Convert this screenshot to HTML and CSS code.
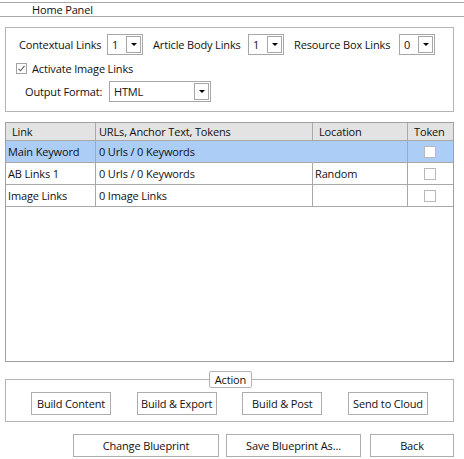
FILE: index.html
```html
<!DOCTYPE html>
<html>
<head>
<meta charset="utf-8">
<link rel="stylesheet" href="styles.css">
</head>
<body>
<div class="tabbar"><span class="tab">Home Panel</span></div>

<div class="group opts">
  <div class="row r1">
    <span class="lbl l1">Contextual Links</span>
    <div class="combo small"><span class="val">1</span><span class="dd"><i class="arrow"></i></span></div>
    <span class="lbl l2">Article Body Links</span>
    <div class="combo small"><span class="val">1</span><span class="dd"><i class="arrow"></i></span></div>
    <span class="lbl l3">Resource Box Links</span>
    <div class="combo small"><span class="val">0</span><span class="dd"><i class="arrow"></i></span></div>
  </div>
  <div class="row r2">
    <svg class="chk" width="11" height="11" viewBox="0 0 11 11"><rect x="0.5" y="0.5" width="10" height="10" fill="#fff" stroke="#a2a2a2"/><polyline points="2.5,5.8 4.5,7.8 8.5,2.8" fill="none" stroke="#5f5f5f" stroke-width="1.1"/></svg>
    <span class="chklbl">Activate Image Links</span>
  </div>
  <div class="row r3">
    <span class="lbl l4">Output Format:</span>
    <div class="combo wide"><span class="val">HTML</span><span class="dd"><i class="arrow"></i></span></div>
  </div>
</div>

<div class="grid">
  <div class="hd c1">Link</div>
  <div class="hd c2">URLs, Anchor Text, Tokens</div>
  <div class="hd c3">Location</div>
  <div class="hd c4">Token</div>

  <div class="cell c1 sel">Main Keyword</div>
  <div class="cell c2 sel sel-join">0 Urls / 0 Keywords</div>
  <div class="cell c3 sel"></div>
  <div class="cell c4 sel"><span class="tbox"></span></div>

  <div class="cell c1">AB Links 1</div>
  <div class="cell c2">0 Urls / 0 Keywords</div>
  <div class="cell c3">Random</div>
  <div class="cell c4"><span class="tbox"></span></div>

  <div class="cell c1">Image Links</div>
  <div class="cell c2">0 Image Links</div>
  <div class="cell c3"></div>
  <div class="cell c4"><span class="tbox"></span></div>
</div>

<div class="group action">
  <span class="legend">Action</span>
  <button class="btn abtn">Build Content</button>
  <button class="btn abtn">Build &amp; Export</button>
  <button class="btn abtn">Build &amp; Post</button>
  <button class="btn abtn">Send to Cloud</button>
</div>

<div class="footer">
  <button class="btn fb1">Change Blueprint</button>
  <button class="btn fb2">Save Blueprint As...</button>
  <button class="btn fb3">Back</button>
</div>
</body>
</html>
```
FILE: styles.css
```css
html, body {
  margin: 0;
  padding: 0;
  background: #ffffff;
}
body {
  width: 464px;
  height: 459px;
  overflow: hidden;
  font-family: "Open Sans", "Noto Sans", sans-serif;
  font-size: 11px;
  letter-spacing: -0.15px;
  color: #111;
}
.tabbar {
  margin-top: 2px;
  height: 15px;
  box-sizing: border-box;
  border-top: 1px solid #a9a9a9;
  border-bottom: 1px solid #a9a9a9;
  padding-left: 32px;
  line-height: 13px;
}
.group {
  box-sizing: border-box;
  width: 449px;
  margin-left: 5px;
  border: 1px solid #b4b4b4;
}
.opts {
  margin-top: 10px;
  height: 85px;
}
.row {
  display: flex;
  align-items: center;
}
.r1 {
  margin-top: 6px;
  height: 21px;
  padding-left: 13px;
}
.r2 {
  height: 26px;
  padding-left: 10px;
}
.r3 {
  height: 21px;
  padding-left: 19px;
}
.lbl { white-space: nowrap; }
.l1 { width: 88px; }
.l2 { width: 95px; margin-left: 10px; }
.l3 { width: 105px; margin-left: 10px; }
.l4 { width: 84px; }
.chk { display: block; }
.chklbl { margin-left: 5px; }
.combo {
  box-sizing: border-box;
  height: 21px;
  border: 1px solid #a7a7a7;
  display: flex;
  align-items: center;
  padding: 0 1px 0 4px;
  background: #fff;
}
.combo.small { width: 36px; }
.combo.wide { width: 102px; }
.combo .val { flex: 1; }
.dd {
  box-sizing: border-box;
  width: 15px;
  height: 17px;
  border: 1px solid #a7a7a7;
  display: flex;
  align-items: center;
  justify-content: center;
}
.arrow {
  width: 0;
  height: 0;
  border-left: 3px solid transparent;
  border-right: 3px solid transparent;
  border-top: 3px solid #000;
}
.grid {
  box-sizing: border-box;
  width: 449px;
  height: 240px;
  margin: 10px 0 0 5px;
  border: 1px solid #a0a0a0;
  display: grid;
  grid-template-columns: 90px 217px 95px 45px;
  grid-template-rows: 18px 22px 22px 22px;
  align-content: start;
}
.hd, .cell {
  box-sizing: border-box;
  border-bottom: 1px solid #a8a8a8;
  border-right: 1px solid #a8a8a8;
  display: flex;
  align-items: center;
  white-space: nowrap;
}
.hd {
  background: #e3e3e3;
  padding-left: 6px;
  padding-bottom: 1px;
}
.hd.c2 { padding-left: 3px; }
.cell { padding-left: 2px; }
.cell.c2 { padding-left: 3px; }
.cell.c3 { padding-left: 2px; }
.c4 { border-right: none; }
.hd.c4 { padding-left: 6px; }
.cell.c4 { justify-content: center; padding-left: 0; padding-right: 2px; }
.sel { background: #abcdf6; }
.sel-join { border-right-color: #abcdf6; }
.tbox {
  box-sizing: border-box;
  width: 12px;
  height: 12px;
  background: #fff;
  border: 1px solid #b9b9b9;
}
.action {
  position: relative;
  margin-top: 17px;
  height: 43px;
  display: flex;
  justify-content: space-between;
  padding: 12px 25px 6px 25px;
}
.legend {
  position: absolute;
  left: 203px;
  top: -9px;
  box-sizing: border-box;
  width: 43px;
  height: 17px;
  border: 1px solid #b4b4b4;
  border-radius: 2px;
  background: #fff;
  display: flex;
  align-items: center;
  justify-content: center;
  padding-bottom: 1px;
}
.btn {
  box-sizing: border-box;
  height: 23px;
  border: 1px solid #adadad;
  background: #fff;
  font-family: inherit;
  font-size: inherit;
  letter-spacing: inherit;
  color: inherit;
  padding: 0 0 1px 0;
  margin: 0;
  white-space: nowrap;
}
.abtn { width: 80px; }
.footer {
  display: flex;
  margin-top: 12px;
}
.fb1 { margin-left: 73px; width: 146px; }
.fb2 { margin-left: 7px; width: 135px; }
.fb3 { margin-left: 9px; width: 84px; }
```
